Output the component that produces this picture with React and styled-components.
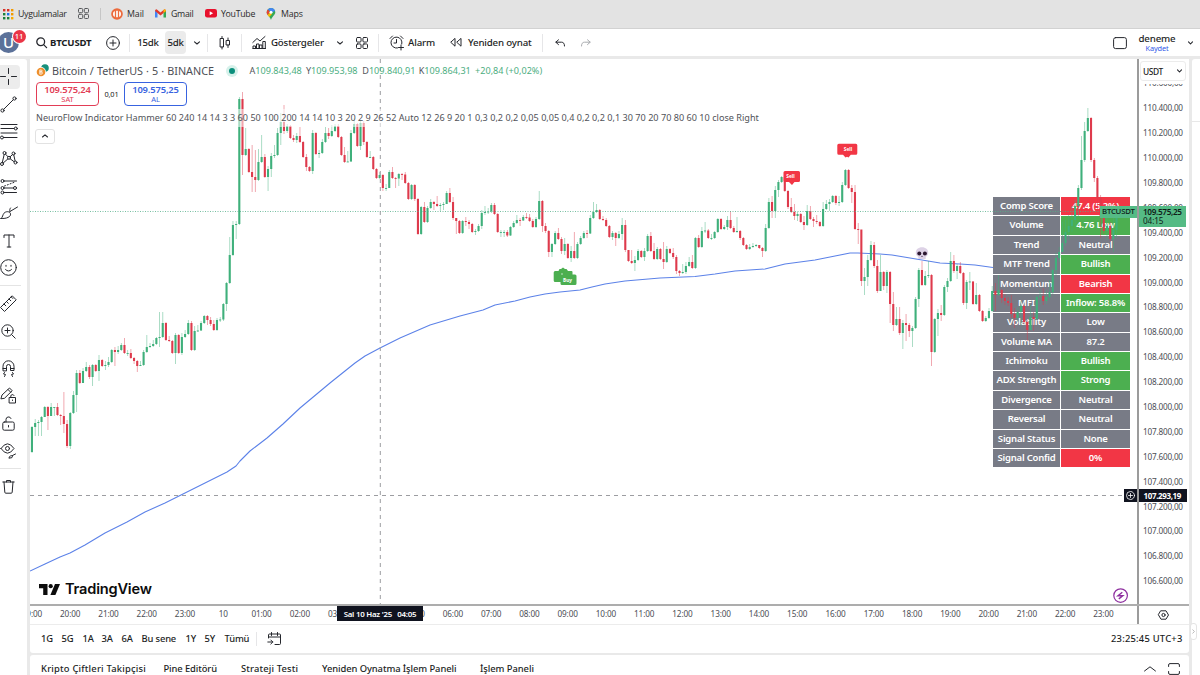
import React from "react";
import styled, { createGlobalStyle } from "styled-components";

const FONT = '"Noto Sans", "Open Sans", sans-serif';

const GlobalStyle = createGlobalStyle`
  * { box-sizing: border-box; }
  body { margin: 0; background: #e9e9e9; overflow: hidden; }
`;

const Page = styled.div`
  width: 1200px;
  height: 675px;
  display: flex;
  flex-direction: column;
  background: #e9e9e9;
  font-family: ${FONT};
  color: #1c1e24;
  overflow: hidden;
`;

/* ---------- bookmarks ---------- */

const Bookmarks = styled.div`
  height: 29px;
  flex: none;
  display: flex;
  align-items: center;
  padding: 0 0 1px 2px;
  background: #e3e3e3;
  border-bottom: 1px solid #d2d2d2;
`;

const Bookmark = styled.div`
  width: ${(p) => p.$w}px;
  display: flex;
  align-items: center;
  gap: ${(p) => p.$gap || 4}px;
  font: 400 8.8px/12px "Open Sans", sans-serif;
  letter-spacing: ${(p) => p.$ls || -0.3}px;
  color: #2b2b2b;
  white-space: nowrap;
  svg { flex: none; }
`;

const Divider = styled.div`
  width: 1px;
  height: ${(p) => p.$h || 18}px;
  background: ${(p) => p.$c || "#e6e6e8"};
  flex: none;
`;

/* ---------- top toolbar ---------- */

const Toolbar = styled.header`
  height: 27px;
  flex: none;
  display: flex;
  align-items: center;
  background: #fff;
`;

const Slot = styled.div`
  width: ${(p) => p.$w}px;
  height: 23px;
  padding-left: ${(p) => p.$pl || 0}px;
  display: flex;
  align-items: center;
  justify-content: ${(p) => (p.$start ? "flex-start" : "center")};
  flex: none;
  font-size: ${(p) => p.$size || 9.7}px;
  font-weight: ${(p) => p.$weight || 500};
  letter-spacing: ${(p) => p.$ls || 0}px;
  white-space: nowrap;
  border-radius: 4px;
  background: ${(p) => (p.$active ? "#ebebeb" : "transparent")};
`;

const Spacer = styled.div`
  flex: 1;
`;

const Avatar = styled.div`
  position: relative;
  width: 30px;
  height: 24px;
  display: flex;
  align-items: center;
  flex: none;
`;

const AvatarDisc = styled.div`
  width: 21px;
  height: 21px;
  margin-left: -2px;
  border-radius: 50%;
  background: #5b7199;
  color: #fff;
  font-size: 15px;
  font-weight: 500;
  line-height: 21px;
  text-align: center;
`;

const AvatarBadge = styled.div`
  position: absolute;
  left: 12.5px;
  top: -1px;
  width: 13px;
  height: 13px;
  border-radius: 50%;
  background: #ea3546;
  box-shadow: 0 0 0 1px #fff;
  color: #fff;
  font-size: 7.6px;
  font-weight: 500;
  line-height: 12.5px;
  text-align: center;
`;

const LayoutName = styled.div`
  width: 48px;
  display: flex;
  flex-direction: column;
  align-items: center;
  font-size: 9.7px;
  font-weight: 500;
  line-height: 10px;
  letter-spacing: -0.15px;
`;

const SaveLink = styled.span`
  font-size: 7.3px;
  line-height: 8px;
  font-weight: 400;
  letter-spacing: -0.1px;
  color: #2f57e8;
`;

/* ---------- body ---------- */

const Body = styled.div`
  flex: 1;
  min-height: 0;
  margin-top: 3px;
  display: flex;
  gap: 3px;
`;

const Tools = styled.nav`
  width: 27px;
  flex: none;
  background: #fff;
  border-top-right-radius: 3px;
  padding-top: 4.2px;
  display: flex;
  flex-direction: column;
`;

const Tool = styled.div`
  height: 27.3px;
  width: 21px;
  margin-left: -2px;
  flex: none;
  display: flex;
  align-items: center;
  justify-content: center;
`;

const ToolActive = styled.div`
  width: 23px;
  height: 24px;
  flex: none;
  border-radius: 4px;
  background: #ececec;
  display: flex;
  align-items: center;
  justify-content: center;
`;

const ToolRule = styled.div`
  height: 1px;
  width: 21px;
  margin: ${(p) => p.$m}px 0;
  background: #e4e4e4;
  flex: none;
`;

const Center = styled.div`
  width: 1159px;
  flex: none;
  display: flex;
  flex-direction: column;
`;

const RightRail = styled.aside`
  flex: 1;
  background: #fff;
  border-top-left-radius: 3px;
  position: relative;
  padding-top: 62px;
`;

const RailRule = styled.div`
  height: 1px;
  background: #e8e8e8;
`;

const RailHandle = styled.div`
  position: absolute;
  left: -2px;
  top: 564px;
  width: 7px;
  height: 17px;
  border: 1px solid #e4e4e4;
  border-radius: 3px;
  background: #fff;
  display: flex;
  align-items: center;
  justify-content: center;
`;

const ChartRow = styled.div`
  height: 547px;
  display: flex;
  background: #fff;
  border-bottom: 2px solid #adadad;
  flex: none;
`;

const Pane = styled.div`
  position: relative;
  width: 1107px;
  height: 545px;
  flex: none;
  overflow: hidden;
`;

const PlotSvg = styled.svg`
  position: absolute;
  inset: 0;
  z-index: ${(p) => p.$z || 0};
`;

const PriceAxis = styled.div`
  position: relative;
  flex: 1;
  border-left: 2px solid #9b9b9b;
  padding: 11.5px 0 0;
  overflow: hidden;
  height: 545px;
`;

const PriceTick = styled.div`
  height: 24.9px;
  display: flex;
  align-items: center;
  padding-left: 4px;
  font-size: 8.2px;
  letter-spacing: -0.2px;
  color: #4c4e55;
  white-space: nowrap;
`;

const Currency = styled.div`
  position: absolute;
  left: 1px;
  top: 2px;
  width: 46px;
  height: 20px;
  padding: 0 3px 0 2px;
  border: 1px solid #ececec;
  border-radius: 3px;
  background: #fff;
  box-shadow: 0 3px 0 #fff;
  display: flex;
  align-items: center;
  justify-content: space-between;
  font-size: 8.4px;
  font-weight: 500;
  letter-spacing: -0.35px;
  color: #222;
`;

const LastPrice = styled.div`
  position: absolute;
  left: 0;
  top: 146.5px;
  width: 47px;
  height: 21px;
  padding: 1px 0 0 4px;
  background: #55bb85;
  color: #10201a;
  font-size: 8.2px;
  line-height: 9.3px;
  letter-spacing: -0.1px;
  white-space: nowrap;
  b { font-weight: 600; letter-spacing: -0.33px; display: block; }
`;

const CrossPrice = styled.div`
  position: absolute;
  left: -2px;
  top: 430px;
  width: 50px;
  height: 13px;
  padding-left: 6.5px;
  background: #10131f;
  color: #fff;
  font-size: 8px;
  font-weight: 700;
  line-height: 13px;
  letter-spacing: -0.36px;
  white-space: nowrap;
`;

const SymbolTag = styled.div`
  position: absolute;
  z-index: 4;
  right: 0;
  top: 146.5px;
  width: 37px;
  height: 12px;
  padding-left: 2px;
  background: #55bb85;
  color: #10201a;
  font-size: 7.8px;
  font-weight: 500;
  line-height: 11.5px;
  letter-spacing: -0.22px;
`;

const CrossPlus = styled.div`
  position: absolute;
  z-index: 4;
  right: 0;
  top: 430px;
  width: 13px;
  height: 13px;
  background: #10131f;
  display: flex;
  align-items: center;
  justify-content: center;
`;

/* ---------- legend ---------- */

const Legend = styled.div`
  position: absolute;
  z-index: 3;
  left: 0;
  top: 0;
  display: flex;
  flex-direction: column;
  align-items: flex-start;
  padding: 3.5px 0 0 6px;
`;

const TitleRow = styled.div`
  height: 16px;
  display: flex;
  align-items: center;
  white-space: nowrap;
`;

const PairName = styled.div`
  width: 172px;
  margin-left: 3px;
  font-size: 10.8px;
  line-height: 14px;
  color: #4d4f55;
  letter-spacing: -0.02px;
  word-spacing: 0.3px;
`;

const Status = styled.div`
  width: 6px;
  height: 6px;
  margin: 0 14.5px 0 5px;
  border-radius: 50%;
  background: #0b8f7c;
  box-shadow: 0 0 0 3px #d6f1ea;
`;

const Ohlc = styled.div`
  font-size: 9.1px;
  line-height: 14px;
  color: #4cae7f;
  width: ${(p) => p.$w}px;
  i { font-style: normal; color: #55575d; }
`;

const TradeRow = styled.div`
  display: flex;
  align-items: center;
  height: 26px;
  margin-top: 2px;
`;

const TradeButton = styled.div`
  width: 63px;
  height: 24px;
  border: 1px solid ${(p) => p.$c};
  border-radius: 4px;
  background: #fff;
  color: ${(p) => p.$c};
  display: flex;
  flex-direction: column;
  align-items: center;
  justify-content: center;
  font-size: 9.4px;
  font-weight: 600;
  line-height: 11px;
  letter-spacing: -0.15px;
  small { font-size: 7.5px; line-height: 9px; font-weight: 400; letter-spacing: -0.1px; }
`;

const Spread = styled.div`
  width: 25px;
  text-align: center;
  font-size: 7.4px;
  letter-spacing: -0.15px;
  color: #222;
`;

const IndicatorName = styled.div`
  height: 18px;
  margin-top: 2.5px;
  padding-right: 2px;
  background: rgba(255, 255, 255, 0.55);
  line-height: 18px;
  font-size: 9.1px;
  letter-spacing: 0.01px;
  color: #515359;
  white-space: nowrap;
`;

const Collapse = styled.div`
  width: 20px;
  height: 15px;
  margin: 1.5px 0 0 -1px;
  border: 1px solid #e2e2e2;
  border-radius: 3px;
  background: #fff;
  display: flex;
  align-items: center;
  justify-content: center;
`;

/* ---------- dashboard table ---------- */

const Dash = styled.div`
  position: absolute;
  z-index: 1;
  left: 963px;
  top: 138px;
  width: 137px;
  display: flex;
  flex-direction: column;
  gap: 1px;
`;

const DashRow = styled.div`
  height: 18.38px;
  display: grid;
  grid-template-columns: 67px 69px;
  gap: 1px;
`;

const DashCell = styled.div`
  background: ${(p) => p.$c || "#787b86"};
  color: #fff;
  font-size: 9.5px;
  font-weight: 600;
  letter-spacing: -0.2px;
  line-height: 17px;
  text-align: center;
  white-space: nowrap;
`;

const Brand = styled.div`
  position: absolute;
  z-index: 2;
  left: 9px;
  top: 521px;
  height: 18px;
  display: flex;
  align-items: center;
  gap: 5px;
  font: 600 14.6px/18px Inter, sans-serif;
  letter-spacing: -0.2px;
  color: #0c0c0c;
`;

/* ---------- time axis and bottom rows ---------- */

const TimeRow = styled.div`
  height: 19px;
  flex: none;
  display: flex;
  background: #fff;
  border-bottom: 1px solid #ececec;
`;

const TimeLabels = styled.div`
  position: relative;
  width: 1107px;
  height: 18px;
  display: flex;
  overflow: hidden;
  flex: none;
`;

const TimeTick = styled.div`
  width: 38.28px;
  flex: none;
  text-align: center;
  font-size: 8.2px;
  line-height: 16px;
  letter-spacing: -0.13px;
  color: #4c4e55;
  &:first-child { margin-left: -17.2px; }
`;

const TimeCursor = styled.div`
  position: absolute;
  left: 307px;
  top: -1px;
  width: 86px;
  height: 16px;
  background: #10131f;
  color: #fff;
  font-size: 7.9px;
  font-weight: 600;
  line-height: 18px;
  text-align: center;
  letter-spacing: -0.25px;
  white-space: pre;
`;

const AxisCorner = styled.div`
  flex: 1;
  border-left: 2px solid #9b9b9b;
  display: flex;
  align-items: center;
  justify-content: center;
  padding-right: 1px;
`;

const RangeRow = styled.div`
  height: 27.5px;
  flex: none;
  background: #fff;
  border-radius: 0 0 3px 3px;
  display: flex;
  align-items: center;
  padding: 0 7px 0 11px;
`;

const Range = styled.div`
  width: ${(p) => p.$w}px;
  font-size: 9.4px;
  font-weight: ${(p) => p.$weight || 500};
  letter-spacing: ${(p) => p.$ls || -0.15}px;
  white-space: nowrap;
`;

const TabsRow = styled.div`
  flex: 1;
  margin-top: 2.5px;
  background: #fff;
  border-radius: 3px 3px 0 0;
  display: flex;
  align-items: flex-start;
  padding: 7px 4px 0 11px;
`;

const Tab = styled.div`
  width: ${(p) => p.$w}px;
  font-size: 9.4px;
  font-weight: 500;
  line-height: 14px;
  letter-spacing: ${(p) => p.$ls}px;
  white-space: nowrap;
`;

const TabAction = styled.div`
  width: ${(p) => p.$w}px;
  height: 14px;
  display: flex;
  align-items: center;
  justify-content: center;
  flex: none;
`;

/* ---------- icons ---------- */

const Glyph = styled.svg`
  display: block;
  flex: none;
  overflow: visible;
  fill: none;
  stroke: ${(p) => p.$c || "#25272d"};
  stroke-width: ${(p) => p.$sw || 1};
  stroke-linecap: round;
  stroke-linejoin: round;
`;

const Icon = ({ w = 18, h = 18, c, sw, children }) => (
  <Glyph width={w} height={h} viewBox={`0 0 ${w} ${h}`} $c={c} $sw={sw}>
    {children}
  </Glyph>
);

const Chevron = ({ w = 6, up }) => (
  <Icon w={w} h={4} sw={1.1}>
    <path d={up ? `M.5 3 ${w / 2} .8 ${w - 0.5} 3` : `M.5 .8 ${w / 2} 3 ${w - 0.5} .8`} />
  </Icon>
);

const FourSquares = ({ s = 12, c }) => {
  const a = s * 0.38;
  const b = s - a - 0.5;
  return (
    <Icon w={s} h={s} c={c}>
      {[[0.5, 0.5], [b, 0.5], [0.5, b], [b, b]].map(([x, y]) => (
        <rect key={x + "-" + y} x={x} y={y} width={a} height={a} rx="1" />
      ))}
    </Icon>
  );
};

/* ---------- series: [close, high, low] as heights on the chart canvas ---------- */

const SERIES = [
  [427, 426, 453], [423, 419, 436], [422, 420, 436], [417, 416, 436], [407, 406, 417], [416, 406, 430],
  [407, 403, 416], [407, 407, 416], [415, 403, 416], [416, 414, 425], [424, 392, 433], [446, 420, 448],
  [413, 412, 449], [395, 391, 414], [373, 370, 412], [383, 370, 384], [371, 368, 383], [367, 362, 372],
  [377, 365, 379], [365, 364, 386], [371, 364, 372], [360, 355, 381], [366, 359, 367], [365, 361, 370],
  [362, 357, 367], [350, 349, 363], [352, 347, 366], [350, 346, 354], [345, 343, 351], [353, 338, 354],
  [353, 350, 356], [358, 349, 359], [361, 357, 364], [366, 360, 372], [365, 361, 366], [352, 350, 366],
  [347, 335, 353], [346, 343, 348], [344, 340, 347], [338, 337, 345], [337, 312, 347], [323, 312, 338],
  [340, 322, 341], [341, 336, 342], [353, 340, 354], [335, 333, 364], [353, 334, 354], [337, 333, 355],
  [334, 330, 338], [323, 320, 335], [350, 321, 351], [331, 326, 351], [330.5, 325, 332], [323, 321, 331],
  [316, 315, 324], [320, 315, 325], [324, 317, 326], [330, 320, 331], [320, 318, 331], [319.5, 317, 322],
  [304, 303, 321], [283, 282, 311], [255, 237, 284], [225, 221, 256], [224, 221, 239], [99, 97, 225],
  [155, 92, 175], [149, 128, 156], [172, 148, 173], [177, 145, 192], [180, 150, 192], [162, 149, 181],
  [157, 135, 163], [177, 154, 178], [169, 166, 191], [156, 153, 177], [155, 145, 158], [133, 128, 156],
  [122, 113, 145], [131, 105, 134], [126, 124, 133], [138, 125, 139], [140, 135, 142], [136, 133, 143],
  [142, 127, 143], [157, 141, 158], [167, 154, 171], [171, 166, 172], [133, 130, 174], [154, 132, 155],
  [153, 150, 158], [142, 139, 154], [133, 127, 143], [136, 128, 139], [131, 125, 137], [126, 124, 132],
  [137, 124, 138], [155, 136, 156], [162, 147, 163], [161.5, 151, 162], [133, 130, 162], [124, 118, 134],
  [146, 123, 147], [123, 120, 150], [142, 121, 145], [157, 141, 158], [157, 151, 158], [169, 156, 170],
  [178, 168, 179], [175, 172, 179], [188, 174, 191], [188, 184, 191], [172, 170, 188], [178, 167, 179],
  [178.5, 177, 188], [174, 173, 186], [174.5, 173, 180], [183, 172, 184], [199, 182, 200], [185, 184, 200],
  [199, 184, 201], [234, 198, 235], [207, 206, 235], [222, 202, 223], [208, 206, 223], [202, 199, 209],
  [204, 201, 210], [206, 196, 207], [205, 203, 211], [204, 202, 210], [193, 191, 204], [202, 188, 203],
  [218, 197, 220], [221, 218, 234], [233, 220, 234], [221, 220, 234], [222, 217, 226], [224, 220, 229],
  [232, 223, 233], [231, 229, 235], [226, 224, 232], [213, 210, 229], [212, 206, 215], [211.5, 208, 214],
  [205, 203, 213], [214, 203, 215], [232, 213, 233], [232, 230, 237], [232, 230, 237], [235.5, 230, 237],
  [227, 226, 236], [223, 221, 228], [220, 215, 224], [220.5, 218, 226], [217, 215, 221], [217.5, 213, 219],
  [221, 214, 222], [227, 219, 228], [219, 217, 228], [201, 191, 220], [226, 200, 232], [231, 223, 233],
  [252, 230, 257], [244, 243, 257], [233, 231, 245], [239, 228, 240], [251, 237, 254], [244, 238, 255],
  [258, 243, 259], [251, 246, 262], [258, 232, 259], [244, 242, 259], [238, 236, 245], [233, 231, 239],
  [233.5, 230, 238], [218, 215, 234], [212, 202, 219], [210, 204, 213], [219, 209, 220], [220, 216, 221],
  [226, 218, 227], [237, 225, 238], [233, 231, 240], [238, 232, 246], [234, 231, 239], [225, 218, 240],
  [250, 220, 252], [261, 250, 262], [263, 250, 264], [260, 256, 271], [251, 249, 261], [257, 250, 258],
  [251, 248, 261], [236, 234, 252], [251, 232, 252], [259, 243, 260], [249, 247, 260], [259, 248, 260],
  [262, 242, 269], [249, 246, 263], [253, 248, 254], [257, 248, 259], [271, 255, 274], [273, 270, 276],
  [272, 264, 274], [266, 262, 274], [262, 257, 267], [268, 255, 269], [238, 237, 269], [247, 235, 248],
  [231, 227, 248], [230.5, 222, 233], [238, 229, 239], [238, 234, 240], [232, 231, 239], [219, 218, 233],
  [229, 218, 230], [227, 225, 230], [220, 216, 230], [228, 211, 229], [232, 226, 233], [231, 217, 233],
  [238, 230, 240], [245, 237, 246], [249, 244, 250], [247, 244, 250], [246, 243, 248], [245, 244, 247],
  [248, 245, 249], [251, 247, 257], [228, 224, 252], [202, 198, 229], [211, 196, 218], [190, 186, 218],
  [182, 180, 197], [177, 176, 183], [191, 177, 192], [207, 190, 209], [212, 198, 213], [216, 204, 220],
  [214, 212, 221], [222, 213, 223], [225, 216, 230], [211, 205, 226], [219, 206, 220], [221, 217, 227],
  [222, 215, 224], [226, 221, 227], [209, 202, 227], [204, 200, 210], [202, 199, 211], [196, 195, 203],
  [203, 195, 205], [202, 196, 206], [185, 182, 203], [170, 169, 186], [188, 169, 189], [192, 185, 203],
  [229, 185, 230], [229.5, 223, 244], [281, 230, 286], [277, 268, 295], [260, 255, 286], [245, 241, 261],
  [266, 242, 268], [291, 260, 293], [272, 255, 291], [286, 271, 290], [272, 270, 293], [304, 271, 323],
  [325, 292, 331], [319, 307, 326], [333, 307, 335], [323, 320, 349], [325, 314, 341], [331, 323, 337],
  [328, 326, 347], [299, 297, 329], [270, 268, 307], [285, 261, 286], [276, 271, 286], [275, 261, 278],
  [352, 274, 366], [319, 318, 353], [313, 309, 336], [315, 305, 321], [287, 285, 316], [281, 278, 292],
  [261, 252, 282], [271, 255, 273], [266, 264, 279], [273, 262, 274], [303, 272, 305], [282, 280, 309],
  [281.5, 272, 290], [304, 281, 305], [295, 283, 305], [311, 294, 312], [321, 310, 322], [318, 316, 322],
  [311, 308, 319], [291, 286, 312], [295, 283, 311], [290, 275, 296], [298, 289, 303], [301, 294, 305],
  [303, 297, 306], [314, 295, 318], [318, 308, 328], [312, 307, 322], [306, 301, 325], [322, 305, 324],
  [330, 320, 341], [317, 305, 330], [319, 312, 331], [297, 295, 320], [296, 290, 304], [301, 288, 305],
  [297, 290, 304], [292, 280, 300], [270, 268, 294], [258, 253, 275], [252, 247, 262], [243, 222, 252],
  [232, 220, 246], [226, 215, 240], [220, 206, 232], [206, 200, 226], [188, 185, 216], [160, 136, 190],
  [131, 122, 162], [118, 108, 132], [160, 117, 162], [178, 158, 182], [198, 176, 212], [216, 195, 238],
  [231, 212, 234], [226, 215, 240], [239, 222, 242], [230, 218, 252], [212, 210, 238],
];

const AVERAGE =
  "30,571 45,564 60,557 70,553 85,545 105,533 127,522 145,512 165,503 180,495.5 205,483 227,472 236,466 240,461 250,451 267,438 283,424 300,408 330,383 345,371 355,363 365,356 380,348 400,338 430,325 460,316 483,310 495,305 515,301 530,297 545,294 560,292 580,290 592,287 605,284 625,281 660,278 695,276.5 715,274 735,271 765,269 785,264 815,260 835,256 850,253 858,253 880,254 892,255 910,258 925,260.5 940,263 960,264 975,265 993,267.5";

const UP = "#3fb07b";
const DOWN = "#de3a4c";

const candles = SERIES.map(([close, high, low], i) => {
  const open = i ? SERIES[i - 1][0] : 452;
  return { x: 32 + i * 3.19, open, close, high, low, color: close <= open ? UP : DOWN };
});

const Plot = () => (
  <>
    <PlotSvg width="1107" height="545" viewBox="30 59 1107 545">
      <polyline points={AVERAGE} fill="none" stroke="#5c82e8" strokeWidth="1.1" strokeLinejoin="round" />
    </PlotSvg>
    <PlotSvg $z={2} width="1107" height="545" viewBox="30 59 1107 545">
      {candles.map((d) => (
        <g key={d.x} fill={d.color}>
          <rect x={d.x - 0.4} y={d.high} width="0.8" height={d.low - d.high} opacity="0.55" />
          <rect x={d.x - 1.1} y={Math.min(d.open, d.close)} width="2.1" height={Math.max(0.9, Math.abs(d.open - d.close))} />
        </g>
      ))}
      <line x1="30" x2="1100" y1="211.5" y2="211.5" stroke="#55ae8a" strokeWidth="0.8" strokeDasharray="1 1.5" />
      <line x1="30" x2="1124" y1="495.5" y2="495.5" stroke="#9c9da1" strokeWidth="1" strokeDasharray="4 4" />
      <line x1="380.3" x2="380.3" y1="59" y2="604" stroke="#9c9da1" strokeWidth="1" strokeDasharray="4 4" />
      <path
        d="M555.200 271h3.300l1-2h1.500l2-1.500 2 1.500h1.500l1.500 2h3.500q1 0 1 1v2.500h2.500q1.500 0 1.500 1.500v7.500q0 1.500-1.500 1.500h-13q-1.500 0-1.500-1.500v-1.500h-5.300q-1.500 0-1.500-1.500v-8q0-1.500 1.500-1.500z"
        fill="#4caf50"
      />
      <g fill="#f23645">
        <path d="M785 171h13.500q1.500 0 1.500 1.500v8q0 1.500-1.500 1.500h-4l-2.500 3-3-3h-4q-1.500 0-1.500-1.500v-8q0-1.500 1.500-1.500z" />
        <path d="M838.800 143.800h17q1.500 0 1.500 1.500v8q0 1.500-1.500 1.500h-5l-2.300 2.700-1.500-.8-1.500.8-2.500-2.700h-4.200q-1.500 0-1.500-1.500v-8q0-1.500 1.500-1.500z" />
      </g>
      <g fill="#fff" fontFamily="Noto Sans" fontWeight="700" fontSize="4.8" textAnchor="middle">
        <text x="567.500" y="281.600">Buy</text>
        <text x="790.500" y="178">Sell</text>
        <text x="848" y="151">Sell</text>
      </g>
      <rect x="561" y="273.600" width="2" height="0.800" fill="#fff" opacity="0.8" />
      <g>
        <path d="M922 247.300c3.800 0 6.200 2.400 6.200 5.400 0 2-.8 3.200-2.500 4v2.300h-7.400v-2.300c-1.700-.8-2.500-2-2.500-4 0-3 2.400-5.400 6.200-5.400z" fill="#ddd2e6" />
        <circle cx="919.300" cy="253.400" r="2" fill="#2b1730" />
        <circle cx="924.900" cy="253.400" r="2" fill="#2b1730" />
        <path d="M922 255.500l.9 1.400h-1.800z" fill="#5c4763" />
      </g>
      <g fill="none" stroke="#8e2f9f" strokeWidth="1.200">
        <circle cx="1120.600" cy="595.600" r="6.800" fill="#fff" />
        <path d="M1122.300 592.300l-4.300 3.400h4.800l-4 3.200" strokeWidth="1.400" />
      </g>
    </PlotSvg>
  </>
);

const RED = "#f23645";
const GREEN = "#4caf50";
const DASH = [
  ["Comp Score", "47.4 (5.2%)", RED],
  ["Volume", "4.76 Low", GREEN],
  ["Trend", "Neutral"],
  ["MTF Trend", "Bullish", GREEN],
  ["Momentum", "Bearish", RED],
  ["MFI", "Inflow: 58.8%", GREEN],
  ["Volatility", "Low"],
  ["Volume MA", "87.2"],
  ["Ichimoku", "Bullish", GREEN],
  ["ADX Strength", "Strong", GREEN],
  ["Divergence", "Neutral"],
  ["Reversal", "Neutral"],
  ["Signal Status", "None"],
  ["Signal Confid", "0%", RED],
];

const PRICES = Array.from({ length: 21 }, (_, i) => {
  const v = 110600 - i * 200;
  return `${Math.floor(v / 1000)}.${String(v % 1000).padStart(3, "0")},00`;
});

/* the 04:00 tick lies wholly under the cursor label */
const TIMES = Array.from({ length: 29 }, (_, i) => {
  const h = (19 + i) % 24;
  if (h === 4) return "";
  return h === 0 ? "10" : `${String(h).padStart(2, "0")}:00`;
});

const TABS = [
  ["Kripto Çiftleri Takipçisi", 122.5, 0.2],
  ["Pine Editörü", 77.5, -0.1],
  ["Strateji Testi", 81, 0.16],
  ["Yeniden Oynatma İşlem Paneli", 158, -0.08],
  ["İşlem Paneli", 60, -0.05],
];

const RANGES = [["1G", 20.5], ["5G", 21], ["1A", 19], ["3A", 20], ["6A", 20], ["Bu sene", 44], ["1Y", 19], ["5Y", 20], ["Tümü", 31.5]];

const APP_DOTS = ["#d93025", "#d93025", "#f29900", "#188038", "#1a73e8", "#f29900", "#188038", "#188038", "#f9ab00"];

const BookmarksBar = () => (
  <Bookmarks>
    <Bookmark $w={76} $gap={4}>
      <svg width="12" height="12">
        {APP_DOTS.map((c, i) => (
          <rect key={i} x={1 + (i % 3) * 4} y={1 + Math.floor(i / 3) * 4} width="2.400" height="2.400" fill={c} />
        ))}
      </svg>
      Uygulamalar
    </Bookmark>
    <Bookmark $w={22}>
      <FourSquares s={11} c="#55575a" />
    </Bookmark>
    <Divider $h={12} $c="#c6c6c6" />
    <Bookmark $w={54} $ls={-0.05}>
      <svg width="22" height="12">
        <circle cx="16" cy="6" r="5.800" fill="#ec6a3c" />
        <ellipse cx="16" cy="6" rx="4" ry="3.200" fill="#fff" />
        <path d="M14.500 3v6M17.500 3v6" stroke="#ec6a3c" strokeWidth="1.300" />
      </svg>
      Mail
    </Bookmark>
    <Bookmark $w={50} $gap={5}>
      <svg width="11" height="9" viewBox="0 0 11 9">
        <path d="M0 1v7.500h2.500V4z" fill="#4285f4" />
        <path d="M11 1v7.500H8.500V4z" fill="#34a853" />
        <path d="M0 2Q0 .3 1.600.3L5.500 3.500 9.400.3Q11 .3 11 2L5.500 6.500z" fill="#e2382b" />
        <path d="M8.500 1L9.400.3Q11 .3 11 2L8.500 4z" fill="#fbbc04" />
      </svg>
      Gmail
    </Bookmark>
    <Bookmark $w={61} $gap={4}>
      <svg width="12" height="9">
        <rect width="12" height="8.500" rx="2.200" fill="#e8112d" />
        <path d="M4.700 2.300v4l3.400-2z" fill="#fff" />
      </svg>
      YouTube
    </Bookmark>
    <Bookmark $w={50} $gap={5} $ls={-0.15}>
      <svg width="10" height="12" viewBox="0 0 10 12">
        <path d="M5 0a4.300 4.300 0 0 1 4.300 4.300C9.300 7 6 8.500 5 12 4 8.500.7 7 .7 4.300A4.300 4.300 0 0 1 5 0z" fill="#34a853" />
        <path d="M5 0a4.300 4.300 0 0 1 4.100 3L5 4.500 1.700 1.500A4.300 4.300 0 0 1 5 0z" fill="#4285f4" />
        <path d="M1.700 1.500L4 4 1.500 7Q.7 5.700.7 4.300 .7 2.600 1.700 1.500z" fill="#ea4335" />
        <path d="M4 4.500L1.500 7 3.200 9 6 6z" fill="#fbbc04" />
        <circle cx="5" cy="4.300" r="1.500" fill="#fff" />
      </svg>
      Maps
    </Bookmark>
  </Bookmarks>
);

const TopBar = () => (
  <Toolbar>
    <Avatar>
      <AvatarDisc>U</AvatarDisc>
      <AvatarBadge>11</AvatarBadge>
    </Avatar>
    <Slot $w={20} $pl={2}>
      <Icon w={11} h={11} sw={1.3}>
        <circle cx="4.700" cy="4.700" r="3.900" />
        <path d="M7.600 7.600l3 3" />
      </Icon>
    </Slot>
    <Slot $w={44} $start $weight={700} $size={9.6} $ls={-0.18}>BTCUSDT</Slot>
    <Slot $w={35} $pl={2}>
      <Icon w={14} h={14}>
        <circle cx="7" cy="7" r="6.400" />
        <path d="M7 4v6M4 7h6" />
      </Icon>
    </Slot>
    <Divider />
    <Slot $w={35} $pl={1} $ls={-0.25}>15dk</Slot>
    <Slot $w={21} $active $ls={-0.25}>5dk</Slot>
    <Slot $w={21}><Chevron /></Slot>
    <Divider />
    <Slot $w={33} $pl={1}>
      <Icon w={12} h={14}>
        <rect x="1.500" y="2.500" width="3" height="8.500" />
        <path d="M3 .5v2M3 11v2" />
        <rect x="7.500" y="4.500" width="3" height="4.500" />
        <path d="M9 2v2.500M9 9v2.500" />
      </Icon>
    </Slot>
    <Divider />
    <Slot $w={29} $pl={5}>
      <Icon w={14} h={13}>
        <path d="M.8 6.500L5 2.500 8 5 13 .5M1 12.500h12.500M1 12.500V10h2.500v2.500M4.500 12.500V8H7v4.500M7.500 12.500V9H10v3.500M10.800 12.500V5.500h2.500v7" />
      </Icon>
    </Slot>
    <Slot $w={54} $start $ls={-0.18}>Göstergeler</Slot>
    <Slot $w={21} $pl={8}><Chevron /></Slot>
    <Slot $w={32}><FourSquares s={12} /></Slot>
    <Divider />
    <Slot $w={29} $pl={5}>
      <Icon w={15} h={15}>
        <path d="M12.800 9A5.500 5.500 0 1 0 8.500 13M7.500 4.500V8H5M1 3.500L3.500 1M11.500 1L14 3.500M12 10v5M9.500 12.500h5" />
      </Icon>
    </Slot>
    <Slot $w={40} $start $ls={-0.15}>Alarm</Slot>
    <Slot $w={16}>
      <Icon w={12} h={9}>
        <path d="M5 .8v7.400L1 4.500zM11 .8v7.400L7 4.500z" />
      </Icon>
    </Slot>
    <Slot $w={78} $pl={4} $start $ls={-0.17}>Yeniden oynat</Slot>
    <Divider />
    <Slot $w={33}>
      <Icon w={10} h={8}>
        <path d="M3.500.8L.8 3.200l2.700 2.400M1 3.200h5.500Q9.500 3.200 9.500 7" />
      </Icon>
    </Slot>
    <Slot $w={20}>
      <Icon w={10} h={8} c="#a9abaf">
        <path d="M6.500.8l2.700 2.400-2.700 2.400M9 3.200H3.500Q.5 3.200.5 7" />
      </Icon>
    </Slot>
    <Spacer />
    <Slot $w={26}>
      <Icon w={14} h={12}>
        <rect x=".6" y=".6" width="12.800" height="11" rx="2" />
      </Icon>
    </Slot>
    <LayoutName>
      deneme
      <SaveLink>Kaydet</SaveLink>
    </LayoutName>
    <Slot $w={19} $pl={0}><Chevron w={5} /></Slot>
  </Toolbar>
);

const ToolBox = () => (
  <Tools>
    <Tool>
      <ToolActive>
        <Icon w={17} h={17}>
          <path d="M8.500.5v5M8.500 11.500v5M.5 8.500h5M11.500 8.500h5" />
        </Icon>
      </ToolActive>
    </Tool>
    <Tool>
      <Icon w={17} h={17}>
        <circle cx="2.500" cy="14.500" r="1.600" /><circle cx="14.500" cy="2.500" r="1.600" /><path d="M3.800 13.200l9.400-9.400" />
      </Icon>
    </Tool>
    <Tool>
      <Icon w={18} h={16}>
        <path d="M1 1.500h16M1 5.500h13M1 10h16M4 14.500h13" /><circle cx="15.800" cy="5.500" r="1.500" /><circle cx="2" cy="14.500" r="1.500" />
      </Icon>
    </Tool>
    <Tool>
      <Icon w={17} h={15}>
        <circle cx="4.500" cy="2" r="1.500" /><circle cx="13.500" cy="2.500" r="1.500" /><circle cx="9" cy="6.800" r="1.500" />
        <circle cx="2" cy="13" r="1.500" /><circle cx="15.500" cy="11.500" r="1.500" />
        <path d="M4.200 3.500L2.300 11.500M5.500 3.200l2.500 2.500M10.200 5.700l2.200-2M13.800 4l1.300 6M7.900 7.900L3.200 12M10.200 7.800l4 3" />
      </Icon>
    </Tool>
    <Tool>
      <Icon w={17} h={15}>
        <circle cx="2.500" cy="2" r="1.500" /><circle cx="2.500" cy="9" r="1.500" /><circle cx="15" cy="9" r="1.500" /><circle cx="2.500" cy="13.500" r="1.500" />
        <path d="M4 2h12.500M4 9h9.500M4 13.500h12.500" /><path d="M4.500 7L15 3" strokeDasharray="1 2" />
      </Icon>
    </Tool>
    <Tool>
      <Icon w={18} h={14}>
        <path d="M1 12.500c2-1.500 1.500-3.500 3-5.300 1.800-2.200 6-2 6.500.6.500 3-3.500 5-9.500 4.700zM10 5.500L17.500 1M9.800 5.500c-.3-1.500 0-2.500.7-3.500" />
      </Icon>
    </Tool>
    <Tool>
      <Icon w={12} h={14}>
        <path d="M1 3.500V1h10v2.500M6 1v12M4.200 13h3.600" />
      </Icon>
    </Tool>
    <Tool>
      <Icon w={17} h={17}>
        <circle cx="8.500" cy="8.500" r="7.800" /><path d="M5.500 10.500q3 3.200 6 0M6 6.300v1M11 6.300v1" />
      </Icon>
    </Tool>
    <ToolRule $m={3.8} />
    <Tool>
      <Icon w={17} h={17}>
        <path d="M.8 12.200L12.200.8l4 4L4.800 16.200zM4 9l1.800 1.800M6.500 6.500l1.800 1.800M9 4l1.800 1.800M11.300 2l1.500 1.500" />
      </Icon>
    </Tool>
    <Tool>
      <Icon w={15} h={15}>
        <circle cx="6.500" cy="6.500" r="5.700" /><path d="M10.700 10.700l3.500 3.500M6.500 4v5M4 6.500h5" />
      </Icon>
    </Tool>
    <ToolRule $m={4.6} />
    <Tool>
      <Icon w={13} h={17}>
        <path d="M1 10.500V6.300a5.500 5.500 0 0 1 11 0v4.200H8.500V6.500a2 2 0 0 0-4 0v4zM1 8.500h3.500M8.500 8.500H12M2.500 12.500L1.500 14l2 .5-1 2M10.500 12.500l1 1.500-2 .5 1 2" />
      </Icon>
    </Tool>
    <Tool>
      <Icon w={17} h={17}>
        <path d="M1 11.500L2 8 9.500 1l2.700 2.700L4.800 11zM8 2.500l2.700 2.700M9.500 10.500h6v5.500h-6zM10.800 10.500V9a1.700 1.700 0 0 1 3.200-.5M12.500 13v.5" />
      </Icon>
    </Tool>
    <Tool>
      <Icon w={13} h={15}>
        <rect x=".8" y="6" width="11.400" height="8.200" rx="1.500" /><path d="M4 6V3.500a2.600 2.600 0 0 1 5-1M6.500 9.500v1.500" />
      </Icon>
    </Tool>
    <Tool>
      <Icon w={17} h={17}>
        <path d="M1 6.500q6.500-9.500 13 0-6.500 9.500-13 0z" /><circle cx="7.500" cy="6.500" r="2" /><path d="M9 15.800c.5-1.800 2-2.800 3.500-2l-.5 1.500zM12.500 13.500l3-1.500" />
      </Icon>
    </Tool>
    <ToolRule $m={4} />
    <Tool>
      <Icon w={13} h={15}>
        <path d="M.8 3h11.400M4.500 3V1.500h4V3M2 3l.8 10.200q0 1 1 1h5.400q1 0 1-1L11 3" />
      </Icon>
    </Tool>
  </Tools>
);

export default function App() {
  return (
    <Page>
      <GlobalStyle />
      <BookmarksBar />
      <TopBar />
      <Body>
        <ToolBox />
        <Center>
          <ChartRow>
            <Pane>
              <Plot />
              <Dash>
                {DASH.map(([k, v, c]) => (
                  <DashRow key={k}>
                    <DashCell>{k}</DashCell>
                    <DashCell $c={c}>{v}</DashCell>
                  </DashRow>
                ))}
              </Dash>
              <Legend>
                <TitleRow>
                  <svg width="13" height="13">
                    <circle cx="9" cy="4" r="3.800" fill="#18917c" />
                    <circle cx="5" cy="8" r="4.900" fill="#fff" />
                    <circle cx="5" cy="8" r="4.300" fill="#ee8f2c" />
                    <path d="M3.800 5.800v4.400M3.800 6h1.800q1.200 1 0 1.900H3.800h2q1.200 1.100 0 2.200h-2" stroke="#fff" strokeWidth=".8" fill="none" />
                  </svg>
                  <PairName>Bitcoin / TetherUS · 5 · BINANCE</PairName>
                  <Status />
                  <Ohlc $w={56.4}><i>A</i>109.843,48</Ohlc>
                  <Ohlc $w={56.4}><i>Y</i>109.953,98</Ohlc>
                  <Ohlc $w={56.4}><i>D</i>109.840,91</Ohlc>
                  <Ohlc $w={56.4}><i>K</i>109.864,31</Ohlc>
                  <Ohlc $w={70}>+20,84 (+0,02%)</Ohlc>
                </TitleRow>
                <TradeRow>
                  <TradeButton $c="#e23d56">109.575,24<small>SAT</small></TradeButton>
                  <Spread>0,01</Spread>
                  <TradeButton $c="#3863e0">109.575,25<small>AL</small></TradeButton>
                </TradeRow>
                <IndicatorName>
                  NeuroFlow Indicator Hammer 60 240 14 14 3 3 60 50 100 200 14 14 10 3 20 2 9 26 52 Auto 12 26 9 20 1 0,3 0,2 0,2 0,05 0,05 0,4 0,2 0,2 0,1 30 70 20 70 80 60 10 close Right
                </IndicatorName>
                <Collapse><Chevron up /></Collapse>
              </Legend>
              <Brand>
                <svg width="21" height="11" viewBox="0 0 21 11">
                  <path d="M0 0h8.500v11H4.200V4.300H0z" fill="#0c0c0c" />
                  <circle cx="11.700" cy="2.200" r="2.100" fill="#0c0c0c" />
                  <path d="M16 0h5l-4.600 11h-5z" fill="#0c0c0c" />
                </svg>
                TradingView
              </Brand>
              <SymbolTag>BTCUSDT</SymbolTag>
              <CrossPlus>
                <Icon w={9} h={9} c="#fff" sw={0.8}>
                  <circle cx="4.500" cy="4.500" r="4" /><path d="M4.500 2.500v4M2.500 4.500h4" />
                </Icon>
              </CrossPlus>
            </Pane>
            <PriceAxis>
              {PRICES.map((p) => <PriceTick key={p}>{p}</PriceTick>)}
              <Currency>USDT<Chevron w={5} /></Currency>
              <LastPrice><b>109.575,25</b>04:15</LastPrice>
              <CrossPrice>107.293,19</CrossPrice>
            </PriceAxis>
          </ChartRow>
          <TimeRow>
            <TimeLabels>
              {TIMES.map((t, i) => <TimeTick key={i}>{t}</TimeTick>)}
              <TimeCursor>{"Sal 10 Haz '25   04:05"}</TimeCursor>
            </TimeLabels>
            <AxisCorner>
              <Icon w={11} h={10}>
                <path d="M3 .8h5L10.500 5 8 9.200H3L.5 5z" /><circle cx="5.500" cy="5" r="1.600" />
              </Icon>
            </AxisCorner>
          </TimeRow>
          <RangeRow>
            {RANGES.map(([t, w]) => <Range key={t} $w={w}>{t}</Range>)}
            <Divider $h={14} />
            <Slot $w={34}>
              <Icon w={14} h={13}>
                <path d="M1.500 6V3q0-1 1-1h10q1 0 1 1v8.500q0 1-1 1H8M1.500 5h12M4.500.5v3M10.500.5v3M.8 10h5M3.800 8l2 2-2 2" />
              </Icon>
            </Slot>
            <Spacer />
            <Range $w={71} $ls={0.22}>23:25:45 UTC+3</Range>
          </RangeRow>
          <TabsRow>
            {TABS.map(([t, w, ls]) => <Tab key={t} $w={w} $ls={ls}>{t}</Tab>)}
            <Spacer />
            <TabAction $w={26}>
              <Icon w={12} h={6}><path d="M.5 5L6 .8 11.500 5" /></Icon>
            </TabAction>
            <TabAction $w={22}>
              <Icon w={12} h={12}>
                <path d="M.6 3.500V2Q.6.600 2 .6h8q1.400 0 1.400 1.400v1.500M.6 8.500V10q0 1.400 1.400 1.400h8q1.400 0 1.400-1.400V8.500" />
              </Icon>
            </TabAction>
          </TabsRow>
        </Center>
        <RightRail>
          <RailRule />
          <RailHandle>
            <Icon w={3} h={5} c="#a9a9a9" sw={0.8}><path d="M.8.8l1.600 1.700L.8 4.200" /></Icon>
          </RailHandle>
        </RightRail>
      </Body>
    </Page>
  );
}
